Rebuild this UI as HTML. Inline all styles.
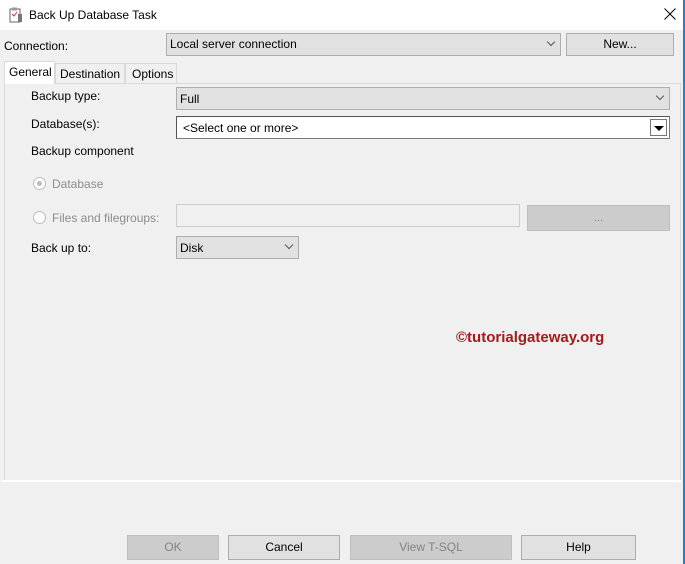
<!DOCTYPE html><html><head><style>
body{margin:0;width:685px;height:564px;background:#f0f0f0;font-family:"Liberation Sans",sans-serif;font-size:12px;color:#000;position:relative;overflow:hidden}
.a{position:absolute}
.cb{position:absolute;background:#e1e1e1;border:1px solid #adadad;box-sizing:border-box;padding:3px 0 0 3px}
.btn{position:absolute;background:#e1e1e1;border:1px solid #adadad;box-sizing:border-box;text-align:center;line-height:23px}
.dis{background:#cccccc;border-color:#bfbfbf;color:#838383}
.chev{position:absolute;right:6px;top:5px;width:5px;height:5px;border-right:1px solid #555;border-bottom:1px solid #555;transform:rotate(45deg)}
.g{color:#8c8c8c}
.rad{position:absolute;width:11px;height:11px;border:1px solid #bcbcbc;border-radius:50%;background:#fff}
</style></head><body>
<div class="a" style="left:0;top:0;width:685px;height:30px;background:#fff"></div>
<svg class="a" style="left:9px;top:7px" width="14" height="16"><rect x="1" y="2" width="10" height="13" fill="#fff" stroke="#666"/><rect x="3" y="0.5" width="5" height="3" fill="#999"/><path d="M3 7l2 2 3-4" stroke="#c33" fill="none"/><rect x="9" y="7" width="4" height="8" fill="#777"/></svg>
<div class="a" style="left:29px;top:8px">Back Up Database Task</div>
<svg class="a" style="left:664px;top:8px" width="12" height="12"><path d="M0.5 0.5L11.5 11.5M11.5 0.5L0.5 11.5" stroke="#000" stroke-width="1"/></svg>
<div class="a" style="left:4px;top:39px">Connection:</div>
<div class="cb" style="left:166px;top:33px;width:395px;height:23px">Local server connection<span class="chev"></span></div>
<div class="btn" style="left:566px;top:33px;width:108px;height:23px;line-height:21px">New...</div>
<div class="a" style="left:4px;top:83px;width:677px;height:399px;border:1px solid #d9d9d9;box-sizing:border-box;background:#f0f0f0"></div>
<div class="a" style="left:1px;top:480px;width:680px;height:2px;background:#fff"></div>
<div class="a" style="left:55px;top:63px;width:70px;height:21px;border:1px solid #d9d9d9;box-sizing:border-box;background:#f0f0f0;padding:3px 0 0 4px">Destination</div>
<div class="a" style="left:125px;top:63px;width:52px;height:21px;border:1px solid #d9d9d9;box-sizing:border-box;background:#f0f0f0;padding:3px 0 0 6px">Options</div>
<div class="a" style="left:4px;top:61px;width:51px;height:23px;border:1px solid #d9d9d9;border-bottom:none;box-sizing:border-box;background:#fff;padding:3px 0 0 4px">General</div>
<div class="a" style="left:31px;top:89px">Backup type:</div>
<div class="cb" style="left:176px;top:87px;width:494px;height:23px;padding-top:4px">Full<span class="chev"></span></div>
<div class="a" style="left:31px;top:117px">Database(s):</div>
<div class="a" style="left:176px;top:116px;width:494px;height:23px;background:#fff;border:1px solid #7a7a7a;border-top-color:#555;border-left-color:#555;box-sizing:border-box;padding:4px 0 0 6px">&lt;Select one or more&gt;
<div class="a" style="right:2px;top:2px;width:17px;height:17px;background:#fff;border:1px solid #777;box-sizing:border-box"><div class="a" style="left:3px;top:6px;width:0;height:0;border-left:5px solid transparent;border-right:5px solid transparent;border-top:5px solid #000"></div></div></div>
<div class="a" style="left:31px;top:144px">Backup component</div>
<div class="rad" style="left:33px;top:177px"><div class="a" style="left:3px;top:3px;width:5px;height:5px;border-radius:50%;background:#bcbcbc"></div></div>
<div class="a g" style="left:52px;top:177px">Database</div>
<div class="rad" style="left:33px;top:211px"></div>
<div class="a g" style="left:52px;top:211px">Files and filegroups:</div>
<div class="a" style="left:176px;top:204px;width:344px;height:23px;border:1px solid #ccc;box-sizing:border-box;background:#f0f0f0"></div>
<div class="btn dis" style="left:527px;top:205px;width:143px;height:26px;line-height:25px;font-size:11px">...</div>
<div class="a" style="left:31px;top:241px">Back up to:</div>
<div class="cb" style="left:176px;top:236px;width:123px;height:23px;padding-top:4px">Disk<span class="chev"></span></div>
<div class="a" style="left:456px;top:329px;color:#a31b1b;font-weight:bold;font-size:15px">©tutorialgateway.org</div>
<div class="btn dis" style="left:127px;top:535px;width:92px;height:25px">OK</div>
<div class="btn" style="left:228px;top:535px;width:112px;height:25px">Cancel</div>
<div class="btn dis" style="left:350px;top:535px;width:162px;height:25px">View T-SQL</div>
<div class="btn" style="left:521px;top:535px;width:115px;height:25px">Help</div>
<div class="a" style="left:683px;top:0;width:2px;height:564px;background:#1883d7"></div>
</body></html>
